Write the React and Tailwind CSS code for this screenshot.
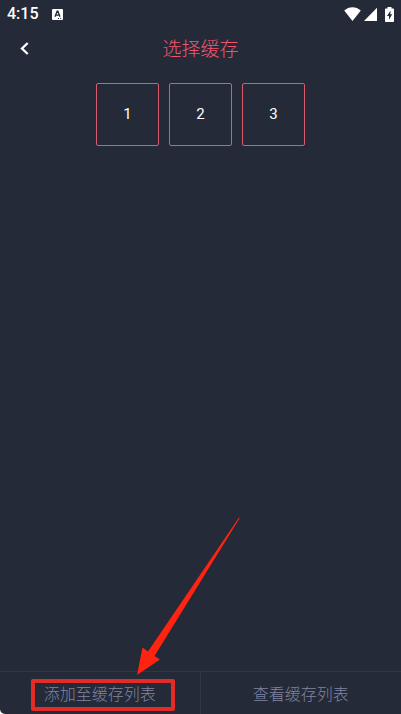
import { useState } from 'react';

const EPISODES = [1, 2, 3];

function StatusBar() {
  return (
    <div className="flex h-7 items-center justify-between pl-[7px] pr-[7px] text-white">
      <div className="flex items-center gap-[13px]">
        <span className="text-base leading-7 font-medium">4:15</span>
        <svg className="h-[11px] w-[11px]" viewBox="0 0 11 11" aria-hidden="true">
          <rect width="11" height="11" rx="1" fill="#fff" />
          <path d="M3 7.800 5.100 2.200h.8L8 7.800M3.800 6.200h3.400" fill="none" stroke="#242a38" strokeWidth="1.300" />
          <path d="M6 9.500h1M8.200 9.500h1" stroke="#242a38" strokeWidth="1" />
        </svg>
      </div>
      <div className="flex items-center">
        <svg className="h-[14px] w-[17px]" viewBox="0 0 17 14" fill="#fff" aria-hidden="true">
          <path d="M.2 3.600C5-.9 12-.9 16.800 3.600L8.500 14z" />
        </svg>
        <svg className="ml-[3px] h-[14px] w-[13px]" viewBox="0 0 13 14" fill="#fff" aria-hidden="true">
          <path d="M13 .7V14H0z" />
        </svg>
        <svg className="ml-2 h-[15px] w-[9px]" viewBox="0 0 9 15" aria-hidden="true">
          <path d="M2.500 0h4v1.600H8c.6 0 1 .4 1 1V14c0 .6-.4 1-1 1H1c-.6 0-1-.4-1-1V2.600c0-.6.4-1 1-1h1.500z" fill="#fff" />
          <path d="M5.600 3.600 2 8.900h2v3.900l3.200-5.500H5.300z" fill="#242a38" />
        </svg>
      </div>
    </div>
  );
}

function EpisodeButton({ number, selected, onClick }) {
  return (
    <button
      type="button"
      aria-pressed={selected}
      onClick={onClick}
      className={selected
        ? 'h-[63px] w-[63px] rounded-[2px] border border-[#e9536a] bg-[#e9536a] text-[15px] text-white'
        : 'h-[63px] w-[63px] rounded-[2px] border border-[#dc5a6a] text-[15px] text-white'}
    >
      {number}
    </button>
  );
}

// 指向“添加至缓存列表”的红色箭头
function Arrow() {
  return (
    <svg
      className="pointer-events-none absolute bottom-[39px] left-[137px] h-[158px] w-[103px]"
      viewBox="0 0 103 158"
      aria-hidden="true"
    >
      <path d="M0 158 5.500 130.500l5.500 4L102 .5l.8.500L17.500 139l5.500 3.500z" fill="#ff2312" />
    </svg>
  );
}

export default function App() {
  const [selected, setSelected] = useState([]);

  const toggle = (n) =>
    setSelected((prev) => (prev.includes(n) ? prev.filter((x) => x !== n) : [...prev, n]));

  return (
    <div className="min-h-screen bg-white font-[Roboto,'Noto_Sans_CJK_SC',sans-serif]">
      <div className="flex min-h-screen flex-col rounded-bl-[5px] bg-[#242a38]">
        <StatusBar />

        <header className="grid h-10 grid-cols-[48px_1fr_48px] items-center">
          <button type="button" aria-label="返回" className="flex h-10 items-center justify-center">
            <svg className="h-[13px] w-[9px]" viewBox="0 0 9 13" fill="none" aria-hidden="true">
              <path d="M7.700 1 2 6.500 7.700 12" stroke="#fff" strokeWidth="2.300" />
            </svg>
          </button>
          <h1 className="pt-1 text-center text-[19px] font-light text-[#f2566c]">选择缓存</h1>
        </header>

        <main className="flex flex-1 flex-wrap content-start justify-center gap-[10px] pt-[15px]">
          {EPISODES.map((n) => (
            <EpisodeButton key={n} number={n} selected={selected.includes(n)} onClick={() => toggle(n)} />
          ))}
        </main>

        <footer className="grid h-[43px] grid-cols-2 border-t border-[#30374a] text-base font-light text-[#8084a0]">
          <div className="relative border-r border-[#30374a]">
            <button type="button" className="h-full w-full pt-1">添加至缓存列表</button>
            <div className="pointer-events-none absolute top-[7px] left-[31px] h-8 w-36 rounded-[2px] border-4 border-[#e42b25]" />
            <Arrow />
          </div>
          <button type="button" className="pt-1">查看缓存列表</button>
        </footer>
      </div>
    </div>
  );
}
